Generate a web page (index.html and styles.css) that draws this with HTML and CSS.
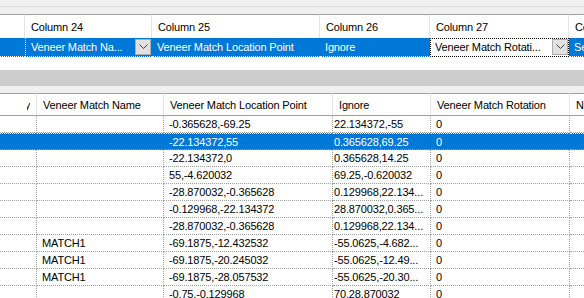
FILE: index.html
```html
<!DOCTYPE html>
<html lang="en">
<head>
    <meta charset="UTF-8">
    <title>Veneer match grid</title>
    <link rel="stylesheet" href="styles.css">
</head>
<body>
  <div class="pane pane-top">
    <div class="strip"></div>
    <div class="view view-top">
      <table class="grid">
        <colgroup>
          <col style="width:25px"><col style="width:127px"><col style="width:168px">
          <col style="width:110px"><col style="width:139px"><col style="width:60px">
        </colgroup>
        <tr class="head">
          <th></th>
          <th>Column 24</th>
          <th>Column 25</th>
          <th>Column 26</th>
          <th>Column 27</th>
          <th>Column 28</th>
        </tr>
        <tr class="row sel">
          <td></td>
          <td class="combo dotl"><span class="txt">Veneer Match Na...</span><span class="drop"><svg width="9" height="6" viewBox="0 0 9 6"><path d="M0.5 0.5 L4.5 4.5 L8.5 0.5" fill="none" stroke="#404040" stroke-width="1"/></svg></span></td>
          <td>Veneer Match Location Point</td>
          <td>Ignore</td>
          <td class="combo focus"><span class="txt">Veneer Match Rotati...</span><span class="drop"><svg width="9" height="6" viewBox="0 0 9 6"><path d="M0.5 0.5 L4.5 4.5 L8.5 0.5" fill="none" stroke="#404040" stroke-width="1"/></svg></span></td>
          <td>Select</td>
        </tr>
      </table>
    </div>
  </div>
  <div class="splitter"></div>
  <div class="gap"></div>
  <div class="pane pane-bottom">
    <table class="grid grid-b">
      <colgroup>
        <col style="width:37px"><col style="width:127px"><col style="width:169px">
        <col style="width:98px"><col style="width:139px"><col style="width:60px">
      </colgroup>
      <tr class="head">
        <th class="tail"><span class="cut">y</span></th>
        <th>Veneer Match Name</th>
        <th>Veneer Match Location Point</th>
        <th>Ignore</th>
        <th>Veneer Match Rotation</th>
        <th>Name</th>
      </tr>
      <tr class="row"><td></td><td></td><td>-0.365628,-69.25</td><td>22.134372,-55</td><td>0</td><td></td></tr>
      <tr class="row sel"><td></td><td></td><td>-22.134372,55</td><td>0.365628,69.25</td><td>0</td><td></td></tr>
      <tr class="row"><td></td><td></td><td>-22.134372,0</td><td>0.365628,14.25</td><td>0</td><td></td></tr>
      <tr class="row"><td></td><td></td><td>55,-4.620032</td><td>69.25,-0.620032</td><td>0</td><td></td></tr>
      <tr class="row"><td></td><td></td><td>-28.870032,-0.365628</td><td>0.129968,22.134...</td><td>0</td><td></td></tr>
      <tr class="row"><td></td><td></td><td>-0.129968,-22.134372</td><td>28.870032,0.365...</td><td>0</td><td></td></tr>
      <tr class="row"><td></td><td></td><td>-28.870032,-0.365628</td><td>0.129968,22.134...</td><td>0</td><td></td></tr>
      <tr class="row"><td></td><td>MATCH1</td><td>-69.1875,-12.432532</td><td>-55.0625,-4.682...</td><td>0</td><td></td></tr>
      <tr class="row"><td></td><td>MATCH1</td><td>-69.1875,-20.245032</td><td>-55.0625,-12.49...</td><td>0</td><td></td></tr>
      <tr class="row"><td></td><td>MATCH1</td><td>-69.1875,-28.057532</td><td>-55.0625,-20.30...</td><td>0</td><td></td></tr>
      <tr class="row"><td></td><td></td><td>-0.75,-0.129968</td><td>70,28.870032</td><td>0</td><td></td></tr>
    </table>
  </div>
</body>
</html>
```

FILE: styles.css
```css
html, body {
	margin: 0;
	padding: 0;
}
body {
	width: 584px;
	height: 298px;
	overflow: hidden;
	background-color: #f0f0f0;
	font-family: "Liberation Sans", Arial, sans-serif;
	font-size: 11px;
	letter-spacing: -0.15px;
	color: #000;
}
.pane {
	overflow: hidden;
	white-space: nowrap;
}
.strip {
	height: 6px;
	border-bottom: 1px solid #dcdcdc;
	background-color: #f0f0f0;
}
.view-top {
	margin-top: 7px;
	height: 56px;
	background-color: #fff;
}
.splitter {
	height: 16px;
	background-color: #cdcdcd;
}
.gap {
	height: 7px;
}
.pane-bottom {
	background-color: #fff;
	height: 205px;
}
.grid {
	table-layout: fixed;
	border-collapse: separate;
	border-spacing: 0;
	width: 629px;
}
.grid-b {
	width: 630px;
}
.grid th {
	height: 23px;
	padding: 0 0 0 6px;
	text-align: left;
	font-weight: normal;
	background-color: #fff;
	border-top: 1px solid #a0a0a0;
	border-right: 1px solid #e5e5e5;
	overflow: hidden;
	vertical-align: middle;
}
.grid-b th {
	height: 21px;
	border-bottom: 1px solid #a0a0a0;
}
.grid th:first-child {
	padding-left: 0;
}
.grid th.tail {
	text-align: right;
	padding-right: 6px;
}
.cut {
	display: inline-block;
	width: 3px;
	overflow: hidden;
	direction: rtl;
	vertical-align: top;
}
.grid td {
	height: 16px;
	padding: 0 0 0 5px;
	overflow: hidden;
	text-overflow: clip;
	border-right: 1px dotted #a0a0a0;
	border-bottom: 1px dotted #a0a0a0;
	vertical-align: middle;
}
.grid-b td:nth-child(4) {
	padding-left: 1px;
}
.pane-top .grid td {
	height: 18px;
	border-right: none;
	border-bottom: 1px dotted #fff;
}
.row.sel td {
	background-color: #0078d7;
	color: #fff;
	border-right-color: #0078d7;
}
.grid-b .row.sel td {
	border-top: 1px dotted #fff;
	height: 15px;
}
.combo {
	position: relative;
}
.combo .drop {
	position: absolute;
	right: 1px;
	top: 1px;
	bottom: 1px;
	width: 16px;
	background-color: #e1e1e1;
	border: 1px solid #adadad;
	box-sizing: border-box;
	display: flex;
	align-items: center;
	justify-content: center;
}
.dotl {
	border-left: 1px dotted #fff;
}
.row.sel td.focus {
	background-color: #fff;
	color: #000;
	outline: 1px dotted #000;
	outline-offset: -1px;
}
```
